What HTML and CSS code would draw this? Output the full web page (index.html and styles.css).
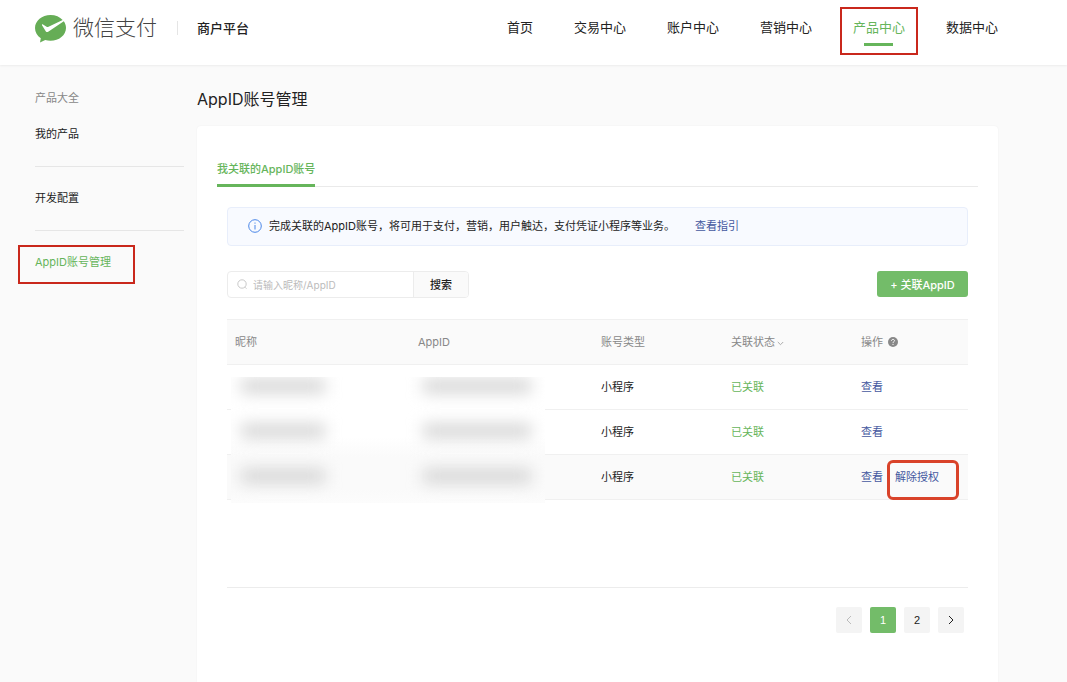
FILE: index.html
```html
<!DOCTYPE html>
<html lang="zh-CN">
<head>
    <meta charset="UTF-8">
    <meta name="viewport" content="width=device-width, initial-scale=1.0">
    <title>AppID账号管理 - 微信支付商户平台</title>
    <link rel="stylesheet" href="styles.css">
</head>
<body>
    <header class="header">
        <a class="logo" href="#">
            <svg class="logo-icon" width="32" height="28" viewBox="0 0 32 28" aria-hidden="true">
                <path fill="#66ad56" d="M15.500 0C7 0 0 5.700 0 13c0 4.200 2.200 7.800 5.800 10.200L5 27.500l5.200-2.500c1.700.5 3.500.8 5.300.8C24 25.800 31 20.200 31 13 31 10.500 30.200 8.200 28.800 6.300L13.200 16.700c-.9.600-1.700.5-2.300-.3L7 10.200c-.3-.7.4-1.200 1-.8l3.600 2.300c.6.400 1.200.4 1.900.1L27.700 5C24.900 1.900 20.500 0 15.500 0z"/>
            </svg>
            <span class="logo-text">微信支付</span>
        </a>
        <span class="platform">商户平台</span>
        <nav class="nav">
            <a href="#">首页</a>
            <a href="#">交易中心</a>
            <a href="#">账户中心</a>
            <a href="#">营销中心</a>
            <a class="active" href="#">产品中心</a>
            <a href="#">数据中心</a>
        </nav>
    </header>

    <div class="container">
        <aside class="sidebar">
            <div class="sidebar-title">产品大全</div>
            <a href="#">我的产品</a>
            <hr>
            <a href="#">开发配置</a>
            <hr>
            <a class="active" href="#">AppID账号管理</a>
        </aside>

        <main class="main">
            <h1>AppID账号管理</h1>
            <section class="panel">
                <div class="tabs">
                    <button type="button" class="tab">我关联的AppID账号</button>
                </div>

                <div class="content">
                    <div class="notice">
                        <svg width="14" height="14" viewBox="0 0 14 14" fill="none" stroke="#4a86e8" aria-hidden="true">
                            <circle cx="7" cy="7" r="6.300"/>
                            <path d="M7 6v4.500M7 3.500v1.200"/>
                        </svg>
                        <span>完成关联的AppID账号，将可用于支付，营销，用户触达，支付凭证小程序等业务。</span>
                        <a href="#">查看指引</a>
                    </div>

                    <div class="toolbar">
                        <form class="search">
                            <svg width="11" height="11" viewBox="0 0 11 11" fill="none" stroke="#bbb" stroke-width=".8" aria-hidden="true">
                                <circle cx="5" cy="5" r="4.200"/>
                                <path d="M8 8.200l1.500 1.500"/>
                            </svg>
                            <input type="text" placeholder="请输入昵称/AppID" aria-label="昵称/AppID">
                            <button type="button">搜索</button>
                        </form>
                        <button type="button" class="btn-primary">+ 关联AppID</button>
                    </div>

                    <div class="table-wrap">
                        <table>
                            <thead>
                                <tr>
                                    <th class="col-name">昵称</th>
                                    <th class="col-appid">AppID</th>
                                    <th class="col-type">账号类型</th>
                                    <th class="col-status">关联状态<svg class="arrow" width="7" height="5" viewBox="0 0 7 5" fill="none" stroke="#aaa" aria-hidden="true"><path d="M.8 1l2.700 2.700L6.200 1"/></svg></th>
                                    <th>操作<svg class="help" width="10" height="10" viewBox="0 0 10 10" fill="none" aria-hidden="true"><circle cx="5" cy="5" r="5" fill="#888"/><path stroke="#fff" d="M3.500 3.900c0-1 .7-1.500 1.500-1.500s1.500.5 1.500 1.300c0 1-1.500 1-1.500 2.200M5 6.900v1.100"/></svg></th>
                                </tr>
                            </thead>
                            <tbody>
                                <tr>
                                    <td></td>
                                    <td></td>
                                    <td>小程序</td>
                                    <td class="linked">已关联</td>
                                    <td><a href="#">查看</a></td>
                                </tr>
                                <tr>
                                    <td></td>
                                    <td></td>
                                    <td>小程序</td>
                                    <td class="linked">已关联</td>
                                    <td><a href="#">查看</a></td>
                                </tr>
                                <tr class="hover">
                                    <td></td>
                                    <td></td>
                                    <td>小程序</td>
                                    <td class="linked">已关联</td>
                                    <td><a href="#">查看</a><a class="revoke" href="#">解除授权</a></td>
                                </tr>
                            </tbody>
                        </table>
                        <!-- hidden account data -->
                        <div class="mask" aria-hidden="true">
                            <i></i><i></i>
                            <i></i><i></i>
                            <i></i><i></i>
                        </div>
                    </div>

                    <div class="pagination">
                        <button type="button" disabled aria-label="上一页">
                            <svg width="6" height="10" viewBox="0 0 6 10" fill="none" stroke="currentColor"><path d="M5 1L1 5l4 4"/></svg>
                        </button>
                        <button type="button" class="current">1</button>
                        <button type="button">2</button>
                        <button type="button" aria-label="下一页">
                            <svg width="6" height="10" viewBox="0 0 6 10" fill="none" stroke="currentColor"><path d="M1 1l4 4-4 4"/></svg>
                        </button>
                    </div>
                </div>
            </section>
        </main>
    </div>
</body>
</html>
```
FILE: styles.css
```css
* {
    box-sizing: border-box;
}

body {
    margin: 0;
    min-height: 100vh;
    display: flex;
    flex-direction: column;
    background-color: #fafafa;
    color: #222;
    font-family: Inter, "Noto Sans CJK SC", sans-serif;
    font-size: 11px;
    line-height: 16px;
}

a {
    color: #4458a0;
    text-decoration: none;
}

button,
input {
    font-family: inherit;
    font-size: 11px;
    color: #222;
}

button {
    padding: 0;
    border: none;
    cursor: pointer;
}

/* Header */
.header {
    display: flex;
    align-items: center;
    height: 65px;
    padding: 0 69px 10px 35px;
    background-color: #fff;
    box-shadow: 0 1px 2px rgba(0, 0, 0, 0.06);
}

.logo {
    display: flex;
    align-items: center;
    gap: 6px;
}

.logo-icon {
    margin-top: 2px;
}

.logo-text {
    color: #444;
    font-size: 21px;
    font-weight: 300;
    line-height: 28px;
}

.platform {
    margin-left: 20px;
    padding-left: 19px;
    border-left: 1px solid #e5e5e5;
    font-size: 13px;
    font-weight: 500;
    line-height: 14px;
}

.nav {
    display: flex;
    gap: 41px;
    margin: 0 0 2px auto;
    font-size: 13px;
    line-height: 20px;
}

.nav a {
    position: relative;
    color: #222;
}

.nav .active {
    color: #66b55b;
}

.nav .active::before {
    content: "";
    position: absolute;
    left: 11px;
    right: 12px;
    bottom: -9px;
    height: 3px;
    background-color: #66b55b;
}

.nav .active::after {
    content: "";
    position: absolute;
    inset: -10px -13px -18px;
    border: 2px solid #c9281c;
}

/* Layout */
.container {
    flex: 1;
    display: flex;
    gap: 13px;
    padding: 15px 69px 0 35px;
}

.sidebar {
    width: 149px;
}

.sidebar a,
.sidebar-title {
    display: block;
    color: #222;
    line-height: 36px;
}

.sidebar .sidebar-title {
    color: #888;
}

.sidebar hr {
    margin: 14px 0 13px;
    border: none;
    border-top: 1px solid #e6e6e6;
}

.sidebar .active {
    position: relative;
    width: max-content;
    color: #66b55b;
}

.sidebar .active::after {
    content: "";
    position: absolute;
    inset: 1px -24px -4px -17px;
    border: 2px solid #c9281c;
}

.main {
    flex: 1;
    display: flex;
    flex-direction: column;
}

h1 {
    margin: 0 0 8px;
    font-size: 16px;
    font-weight: 400;
    line-height: 38px;
}

.panel {
    flex: 1;
    padding: 26px 20px 0;
    background-color: #fff;
    border-radius: 4px 4px 0 0;
    box-shadow: 0 0 2px rgba(0, 0, 0, 0.06);
}

.tabs {
    border-bottom: 1px solid #eaeaea;
}

.tab {
    display: block;
    height: 35px;
    margin-bottom: -1px;
    background: none;
    border-bottom: 3px solid #66b55b;
    color: #66b55b;
    font-weight: 500;
}

.content {
    padding: 20px 10px 0;
}

.notice {
    display: flex;
    align-items: center;
    height: 39px;
    padding: 0 20px 2px;
    background-color: #f8faff;
    border: 1px solid #e8eefb;
    border-radius: 4px;
}

.notice svg {
    margin-right: 7px;
}

.notice a {
    margin-left: 20px;
}

.toolbar {
    display: flex;
    justify-content: space-between;
    margin: 25px 0 21px;
}

.search {
    display: flex;
    align-items: center;
    width: 242px;
    height: 27px;
    padding-left: 9px;
    border: 1px solid #ececec;
    border-radius: 4px;
}

.search input {
    flex: 1;
    min-width: 0;
    padding: 0 5px;
    border: none;
    outline: none;
    background: none;
    font-size: 10px;
}

.search input::placeholder {
    color: #bbb;
}

.search button {
    width: 55px;
    height: 25px;
    padding-bottom: 2px;
    background-color: #fafafa;
    border-left: 1px solid #ececec;
    border-radius: 0 3px 3px 0;
    font-weight: 500;
}

.btn-primary {
    width: 91px;
    height: 26px;
    background-color: #73bc69;
    border-radius: 3px;
    color: #fff;
    font-weight: 500;
}

/* Table */
.table-wrap {
    position: relative;
    min-height: 269px;
    border-bottom: 1px solid #ececec;
}

table {
    width: 100%;
    table-layout: fixed;
    border-collapse: collapse;
}

th,
td {
    height: 45px;
    padding: 0 0 0 8px;
    border-bottom: 1px solid #f0f0f0;
    text-align: left;
    white-space: nowrap;
}

th {
    background-color: #fafafa;
    border-top: 1px solid #f0f0f0;
    color: #888;
    font-weight: 400;
}

.col-name,
.col-appid {
    width: 183px;
}

.col-type,
.col-status {
    width: 130px;
}

.arrow {
    margin-left: 2px;
}

.help {
    margin-left: 5px;
    vertical-align: -1px;
}

.linked {
    color: #66b55b;
}

.hover {
    background-color: #fafafa;
}

.revoke {
    position: relative;
    margin-left: 12px;
}

.revoke::after {
    content: "";
    position: absolute;
    inset: -10px -20px -16px -8px;
    border: 3px solid #d9432a;
    border-radius: 6px;
}

.mask {
    position: absolute;
    top: 58px;
    left: 4px;
    width: 314px;
    display: grid;
    grid-template-columns: 84px 108px;
    grid-auto-rows: 14px;
    gap: 31px 98px;
    padding: 2px 0 20px 10px;
    background: linear-gradient(#fff 60px, #fafafa 80px, #fafafa 112px, #fcfcfc);
    overflow: hidden;
}

.mask i {
    background-color: #d4d4d4;
    filter: blur(8px);
}

/* Pagination */
.pagination {
    display: flex;
    justify-content: flex-end;
    gap: 8px;
    padding: 19px 4px 40px 0;
}

.pagination button {
    display: flex;
    align-items: center;
    justify-content: center;
    width: 26px;
    height: 26px;
    background-color: #f4f4f4;
    border-radius: 2px;
    font-family: "Liberation Sans", sans-serif;
}

.pagination button:disabled {
    color: #bbb;
    cursor: default;
}

.pagination .current {
    background-color: #73bc69;
    color: #fff;
}
```
